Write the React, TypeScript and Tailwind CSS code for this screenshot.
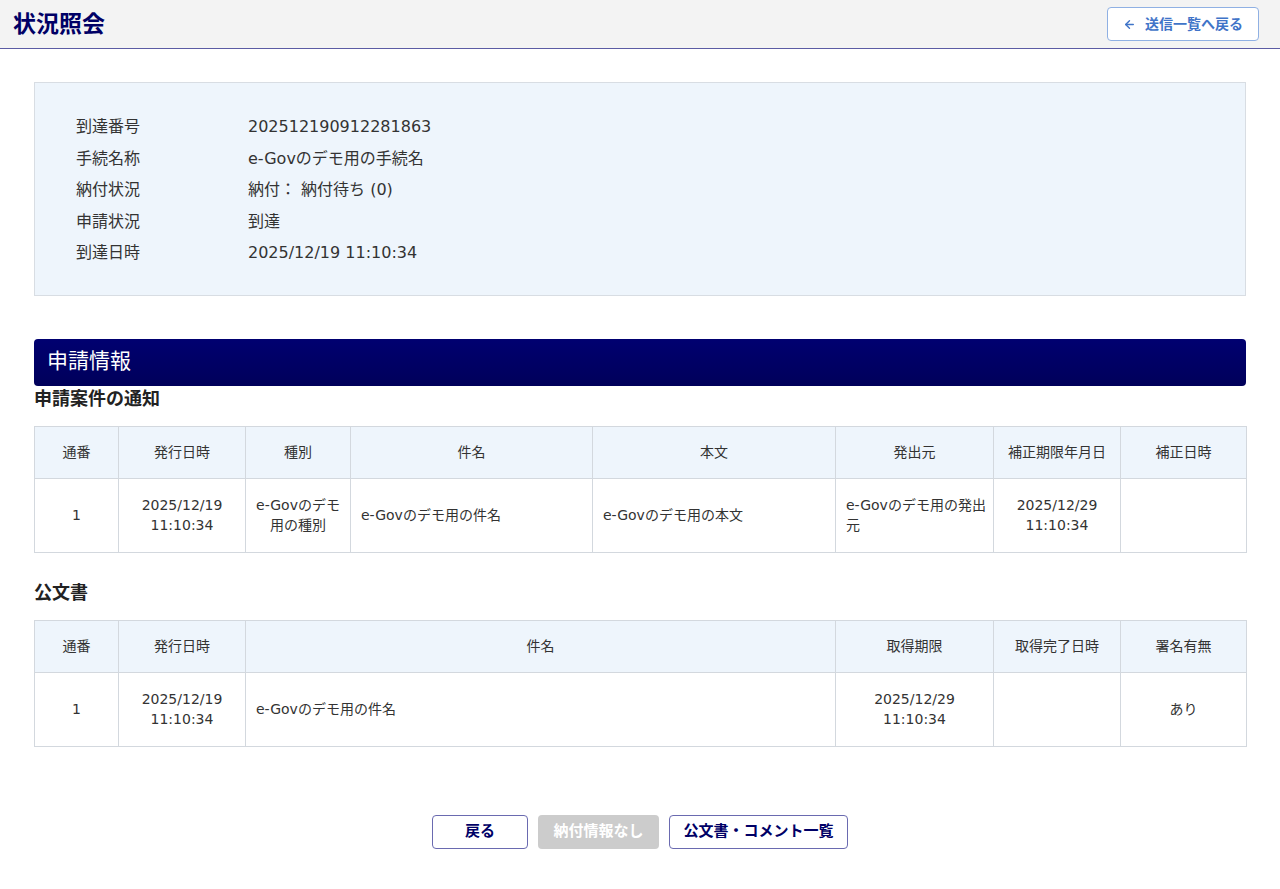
import React from "react";

const font = { fontFamily: '"DejaVu Sans", "Noto Sans CJK JP", sans-serif' };

const info = [
  ["到達番号", "202512190912281863"],
  ["手続名称", "e-Govのデモ用の手続名"],
  ["納付状況", "納付： 納付待ち (0)"],
  ["申請状況", "到達"],
  ["到達日時", "2025/12/19 11:10:34"],
];

const th = "border border-[#d3d8de] bg-[#eef5fc] h-[52px] px-2 font-normal text-[14px] text-[#333] text-center";
const td = "border border-[#d3d8de] h-[74px] px-2 text-[14px] leading-[20px] text-[#333] align-middle";
const tdLeft = "border border-[#d3d8de] h-[74px] pl-[10px] pr-[4px] text-left text-[14px] leading-[20px] text-[#333] align-middle";

function BackArrow() {
  return (
    <svg width="13" height="13" viewBox="0 0 24 24" fill="none" stroke="currentColor" strokeWidth="2.6" strokeLinecap="round" strokeLinejoin="round">
      <path d="M19 12H5" />
      <path d="M12 19l-7-7 7-7" />
    </svg>
  );
}

export default function App() {
  return (
    <div className="min-h-screen bg-white" style={font}>
      <header className="flex h-[49px] items-center justify-between border-b border-[#5b5ba3] bg-[#f3f3f3] pl-[13px] pr-[21px]">
        <h1 className="text-[23px] font-bold leading-[30px] text-[#000066]">状況照会</h1>
        <button className="flex h-[34px] w-[152px] items-center justify-center gap-[9px] rounded border border-[#8fb0e3] bg-white text-[14px] font-bold text-[#3f74c8]">
          <BackArrow />
          送信一覧へ戻る
        </button>
      </header>

      <main className="px-[34px] pt-[33px]">
        <div className="border border-[#d8dde3] bg-[#eef5fc] px-[41px] pt-[28px] pb-[26px]">
          {info.map(([k, v]) => (
            <div key={k} className="flex text-[16px] leading-[31.5px] text-[#333]">
              <span className="w-[172px]">{k}</span>
              <span>{v}</span>
            </div>
          ))}
        </div>

        <div className="mt-[43px] flex h-[47px] items-center rounded bg-gradient-to-b from-[#000070] to-[#00005a] px-[13px] text-[21px] text-white">
          申請情報
        </div>

        <h2 className="mt-[1px] mb-[15px] text-[18px] font-bold leading-[24px] text-[#222]">申請案件の通知</h2>
        <table className="w-full table-fixed border-collapse">
          <colgroup>
            <col className="w-[84px]" />
            <col className="w-[127px]" />
            <col className="w-[105px]" />
            <col className="w-[242px]" />
            <col className="w-[243px]" />
            <col className="w-[158px]" />
            <col className="w-[127px]" />
            <col className="w-[126px]" />
          </colgroup>
          <thead>
            <tr>
              {["通番", "発行日時", "種別", "件名", "本文", "発出元", "補正期限年月日", "補正日時"].map((h) => (
                <th key={h} className={th}>{h}</th>
              ))}
            </tr>
          </thead>
          <tbody>
            <tr>
              <td className={`${td} text-center`}>1</td>
              <td className={`${td} text-center`}>2025/12/19<br />11:10:34</td>
              <td className={`${td} text-center`}>e-Govのデモ用の種別</td>
              <td className={tdLeft}>e-Govのデモ用の件名</td>
              <td className={tdLeft}>e-Govのデモ用の本文</td>
              <td className={tdLeft}>e-Govのデモ用の発出元</td>
              <td className={`${td} text-center`}>2025/12/29<br />11:10:34</td>
              <td className={td}></td>
            </tr>
          </tbody>
        </table>

        <h2 className="mt-[28px] mb-[15px] text-[18px] font-bold leading-[24px] text-[#222]">公文書</h2>
        <table className="w-full table-fixed border-collapse">
          <colgroup>
            <col className="w-[84px]" />
            <col className="w-[127px]" />
            <col className="w-[590px]" />
            <col className="w-[158px]" />
            <col className="w-[127px]" />
            <col className="w-[126px]" />
          </colgroup>
          <thead>
            <tr>
              {["通番", "発行日時", "件名", "取得期限", "取得完了日時", "署名有無"].map((h) => (
                <th key={h} className={th}>{h}</th>
              ))}
            </tr>
          </thead>
          <tbody>
            <tr>
              <td className={`${td} text-center`}>1</td>
              <td className={`${td} text-center`}>2025/12/19<br />11:10:34</td>
              <td className={tdLeft}>e-Govのデモ用の件名</td>
              <td className={`${td} text-center`}>2025/12/29<br />11:10:34</td>
              <td className={td}></td>
              <td className={`${td} text-center`}>あり</td>
            </tr>
          </tbody>
        </table>

        <div className="mt-[68px] flex justify-center gap-[10px] pb-[40px]">
          <button className="h-[34px] w-[96px] rounded border border-[#6a6ab0] bg-white text-[15px] font-bold text-[#000066]">戻る</button>
          <button disabled className="h-[34px] w-[121px] rounded bg-[#cccccc] text-[15px] font-bold text-white">納付情報なし</button>
          <button className="h-[34px] w-[179px] rounded border border-[#6a6ab0] bg-white text-[15px] font-bold text-[#000066]">公文書・コメント一覧</button>
        </div>
      </main>
    </div>
  );
}
